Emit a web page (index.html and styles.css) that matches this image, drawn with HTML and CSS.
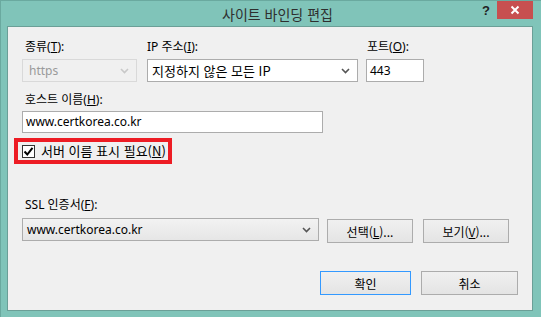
FILE: index.html
```html
<!DOCTYPE html>
<html lang="ko">
<head>
<meta charset="utf-8">
<link rel="stylesheet" href="styles.css">
</head>
<body>
<div class="window">
  <div class="titlebar">
    <div class="title">사이트 바인딩 편집</div>
    <div class="help">?</div>
    <div class="close">
      <svg width="10" height="10" viewBox="0 0 10 10"><path d="M1.5 1.5 L8.5 8.5 M8.5 1.5 L1.5 8.5" stroke="#fff" stroke-width="2"/></svg>
    </div>
  </div>
  <div class="client">
    <div class="row1">
      <div class="field f-type">
        <div class="label">종류(<u>T</u>):</div>
        <div class="combo disabled"><span>https</span><svg class="chev" width="9" height="6" viewBox="0 0 9 6"><path d="M1 1 L4.5 4.5 L8 1" fill="none" stroke="#c8c8c8" stroke-width="1.6"/></svg></div>
      </div>
      <div class="field f-ip">
        <div class="label">IP 주소(<u>I</u>):</div>
        <div class="combo white"><span>지정하지 않은 모든 IP</span><svg class="chev" width="9" height="6" viewBox="0 0 9 6"><path d="M1 1 L4.5 4.5 L8 1" fill="none" stroke="#555" stroke-width="1.6"/></svg></div>
      </div>
      <div class="field f-port">
        <div class="label">포트(<u>O</u>):</div>
        <div class="input">443</div>
      </div>
    </div>
    <div class="label host-label">호스트 이름(<u>H</u>):</div>
    <div class="input host">www.certkorea.co.kr</div>
    <div class="highlight">
      <div class="check">
        <svg width="11" height="11" viewBox="0 0 11 11"><path d="M1.5 5.5 L4.3 8.5 L9.5 1.8" fill="none" stroke="#000" stroke-width="2"/></svg>
      </div>
      <span class="check-text">서버 이름 표시 필요(<u>N</u>)</span>
    </div>
    <div class="label ssl-label">SSL 인증서(<u>F</u>):</div>
    <div class="ssl-row">
      <div class="combo gray ssl"><span>www.certkorea.co.kr</span><svg class="chev" width="9" height="6" viewBox="0 0 9 6"><path d="M1 1 L4.5 4.5 L8 1" fill="none" stroke="#555" stroke-width="1.6"/></svg></div>
      <div class="btn b-select">선택(<u>L</u>)...</div>
      <div class="btn b-view">보기(<u>V</u>)...</div>
    </div>
    <div class="bottom">
      <div class="btn ok">확인</div>
      <div class="btn cancel">취소</div>
    </div>
  </div>
</div>
</body>
</html>
```

FILE: styles.css
```css
html, body {
  margin: 0;
  padding: 0;
}
body {
  width: 541px;
  height: 317px;
  overflow: hidden;
  font-family: "Noto Sans", "Noto Sans CJK KR", sans-serif;
  font-size: 12px;
  color: #000;
}
.window {
  box-sizing: border-box;
  width: 541px;
  height: 317px;
  background: #80c4b9;
  border: 1px solid #6aa99f;
  border-bottom: none;
  border-right: none;
  padding: 0 7px 0 6px;
  display: flex;
  flex-direction: column;
}
.titlebar {
  height: 25px;
  position: relative;
  display: flex;
  align-items: center;
  justify-content: center;
}
.title {
  font-family: "Noto Sans CJK KR", sans-serif;
  font-size: 14px;
  color: #2e2e2e;
  margin-top: 0px;
  margin-left: 14px;
}
.help {
  position: absolute;
  left: 475px;
  top: 2px;
  font-family: "Liberation Sans", sans-serif;
  font-weight: bold;
  font-size: 13px;
  color: #222;
}
.close {
  position: absolute;
  left: 490px;
  top: 0;
  width: 36px;
  height: 18px;
  background: #c75050;
  display: flex;
  align-items: center;
  justify-content: center;
}
.client {
  box-sizing: border-box;
  width: 526px;
  height: 285px;
  background: #f0f0f0;
  border: 1px solid #6b9f97;
  padding: 12px 14px 0 14px;
  display: flex;
  flex-direction: column;
  align-items: flex-start;
}
.label {
  height: 16px;
  line-height: 16px;
  font-family: "Noto Sans", "Noto Sans CJK KR", sans-serif;
  font-size: 12px;
  color: #000;
  white-space: nowrap;
}
.label u, .check-text u, .btn u {
  text-decoration: underline;
  text-underline-offset: 1px;
}
.row1 {
  display: flex;
  align-items: flex-start;
}
.field {
  display: flex;
  flex-direction: column;
  gap: 4px;
}
.f-type { width: 115px; margin-left: 0; }
.f-type .label { margin-left: 3px; }
.f-ip { width: 211px; margin-left: 10px; }
.f-port { width: 58px; margin-left: 8px; }
.f-port .label { margin-left: 1px; }
.combo {
  box-sizing: border-box;
  height: 23px;
  display: flex;
  align-items: center;
  justify-content: space-between;
  padding: 0 7px 0 4px;
  white-space: nowrap;
}
.combo span {
  font-family: "Noto Sans", "Noto Sans CJK KR", sans-serif;
  font-size: 12px;
}
.combo.disabled {
  background: #f0f0f0;
  border: 1px solid #d9d9d9;
  color: #9a9a9a;
}
.combo.disabled span { margin-left: 2px; }
.combo.white {
  background: #fff;
  border: 1px solid #acacac;
}
.combo.white span { font-family: "Noto Sans CJK KR", sans-serif; font-size: 13px; }
.combo.gray {
  background: linear-gradient(#f2f2f2, #e6e6e6);
  border: 1px solid #acacac;
}
.input {
  box-sizing: border-box;
  height: 23px;
  background: #fff;
  border: 1px solid #acacac;
  line-height: 21px;
  padding-left: 3px;
  white-space: nowrap;
}
.host-label {
  margin-top: 10px;
  margin-left: 3px;
}
.input.host {
  margin-top: 3px;
  width: 301px;
  height: 22px;
  line-height: 20px;
}
.highlight {
  box-sizing: border-box;
  margin-top: 5px;
  margin-left: -8px;
  width: 158px;
  height: 26px;
  border: 4px solid #ed1c24;
  display: flex;
  align-items: center;
  padding-left: 4px;
}
.check {
  box-sizing: border-box;
  width: 13px;
  height: 13px;
  background: #fff;
  border: 1px solid #333;
  display: flex;
  align-items: center;
  justify-content: center;
}
.check-text {
  margin-left: 6px;
  font-family: "Noto Sans CJK KR", sans-serif;
  font-size: 13px;
  line-height: 16px;
  white-space: nowrap;
}
.ssl-label {
  margin-top: 33px;
  margin-left: 3px;
}
.ssl-row {
  margin-top: 5px;
  display: flex;
  align-items: flex-start;
}
.combo.ssl { width: 297px; }
.btn {
  box-sizing: border-box;
  height: 24px;
  background: linear-gradient(#f0f0f0, #e4e4e4);
  border: 1px solid #acacac;
  display: flex;
  align-items: center;
  justify-content: center;
  font-family: "Noto Sans CJK KR", sans-serif;
  font-size: 12px;
  white-space: nowrap;
}
.b-select { width: 86px; margin-left: 8px; margin-top: 1px; }
.b-view { width: 86px; margin-left: 10px; margin-top: 1px; }
.bottom {
  margin-top: 28px;
  align-self: flex-end;
  display: flex;
}
.btn.ok {
  width: 91px;
  border-color: #3399ff;
}
.btn.cancel {
  width: 97px;
  margin-left: 10px;
}
```
